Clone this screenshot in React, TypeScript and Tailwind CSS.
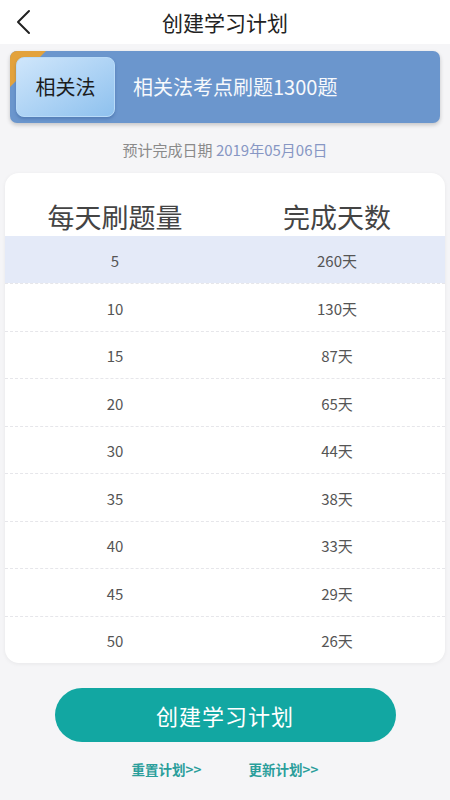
const rows = [
  { n: '5', d: '260天' },
  { n: '10', d: '130天' },
  { n: '15', d: '87天' },
  { n: '20', d: '65天' },
  { n: '30', d: '44天' },
  { n: '35', d: '38天' },
  { n: '40', d: '33天' },
  { n: '45', d: '29天' },
  { n: '50', d: '26天' },
];

const App = () => {
  return (
    <div
      className="min-h-[800px] w-[450px] bg-[#f5f5f7] flex flex-col"
      style={{ fontFamily: '"Noto Sans CJK SC", "Noto Sans", sans-serif' }}
    >
      {/* Header */}
      <header className="h-[44px] bg-white flex items-center relative">
        <svg className="absolute left-[14px] top-[9px]" width="18" height="26" viewBox="0 0 18 26" fill="none">
          <path d="M15 2 L4 13 L15 24" stroke="#222" strokeWidth="2" strokeLinecap="round" strokeLinejoin="round" />
        </svg>
        <h1 className="w-full text-center text-[21px] text-[#222] leading-none">创建学习计划</h1>
      </header>

      {/* Banner */}
      <div className="mx-[10px] mt-[7px] h-[72px] rounded-[7px] bg-[#6b96cd] shadow-[0_2px_4px_rgba(0,0,0,0.2)] relative overflow-hidden flex items-center px-[6px]">
        <div className="absolute left-0 top-0 w-0 h-0 border-t-[36px] border-t-[#e3a23c] border-r-[36px] border-r-transparent" />
        <div className="relative w-[99px] h-[60px] rounded-[8px] bg-gradient-to-br from-[#cfe6fb] to-[#8ec1ee] border border-[#b9dbf8] shadow-[0_2px_3px_rgba(40,80,140,0.35)] flex items-center justify-center">
          <span className="text-[20px] text-[#1c1c1c]">相关法</span>
        </div>
        <span className="ml-[18px] text-[20px] text-[#f7f9fc]">相关法考点刷题1300题</span>
      </div>

      {/* Date */}
      <div className="mt-[17px] text-center text-[15px] leading-[20px]">
        <span className="text-[#8a8a8a]">预计完成日期 </span>
        <span className="text-[#8797c4]">2019年05月06日</span>
      </div>

      {/* Table card */}
      <div className="mx-[5px] mt-[13px] bg-white rounded-[14px] shadow-[0_1px_4px_rgba(0,0,0,0.06)] overflow-hidden">
        <div className="grid grid-cols-2 h-[63px] items-end pb-[2px]">
          <div className="text-center text-[27px] text-[#444] leading-[34px]">每天刷题量</div>
          <div className="text-center text-[27px] text-[#444] leading-[34px] pl-[4px]">完成天数</div>
        </div>
        {rows.map((r, i) => (
          <div
            key={r.n}
            className={
              i === 0
                ? 'grid grid-cols-2 h-[47px] items-center bg-[#e4eaf8]'
                : 'grid grid-cols-2 h-[47.5px] items-center border-t border-dashed border-[#e6e6ea]'
            }
          >
            <div className="text-center text-[15px] text-[#555] pt-[3px]">{r.n}</div>
            <div className="text-center text-[15px] text-[#555] pl-[4px] pt-[3px]">{r.d}</div>
          </div>
        ))}
      </div>

      {/* Button */}
      <div className="mt-[25px] flex justify-center">
        <button className="w-[341px] h-[54px] rounded-full bg-[#12a7a2] text-white text-[22px] tracking-[1px]">
          创建学习计划
        </button>
      </div>

      {/* Links */}
      <div className="mt-[17px] flex justify-center gap-[47px] text-[13.5px] font-semibold text-[#2a9e9b]">
        <span>重置计划&gt;&gt;</span>
        <span>更新计划&gt;&gt;</span>
      </div>
    </div>
  );
};

export default App;
